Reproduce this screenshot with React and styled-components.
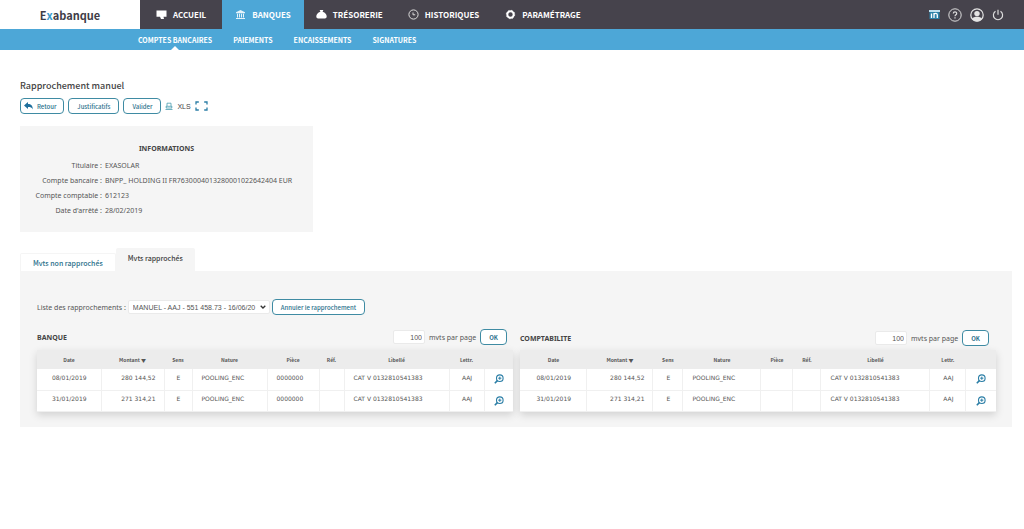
import React, { useState } from 'react';
import styled, { createGlobalStyle } from 'styled-components';

const sourceSans = '"Noto Sans CJK SC", "Noto Sans", sans-serif';
const verdana = '"Noto Sans", sans-serif';
const tableFont = '"DejaVu Sans", sans-serif';
const arial = '"Liberation Sans", sans-serif';

const menus = [
  { name: 'ACCUEIL', icon: 'screen', space: 16 },
  { name: 'BANQUES', icon: 'bank', space: 13 },
  { name: 'TRÉSORERIE', icon: 'purse', space: 12 },
  { name: 'HISTORIQUES', icon: 'clock', space: 13 },
  { name: 'PARAMÉTRAGE', icon: 'gear', space: 13 },
];

const subMenus = ['COMPTES BANCAIRES', 'PAIEMENTS', 'ENCAISSEMENTS', 'SIGNATURES'];

const infos = [
  ['Titulaire :', 'EXASOLAR'],
  ['Compte bancaire :', 'BNPP_ HOLDING II FR7630004013280001022642404 EUR'],
  ['Compte comptable :', '612123'],
  ["Date d'arrêté :", '28/02/2019'],
];

const bankColumns = [64, 63, 28, 75, 52, 25, 105, 35, 29];
const accountColumns = [67, 66, 30, 78, 32, 28, 109, 36, 30];

const bankRows = [
  { date: '08/01/2019', amount: '280 144,52', piece: '0000000' },
  { date: '31/01/2019', amount: '271 314,21', piece: '0000000' },
];
const accountRows = bankRows.map((row) => ({ ...row, piece: '' }));

function MenuIcon({ name }) {
  return (
    <svg width="11" height="11" viewBox="0 0 11 11" aria-hidden="true">
      {name === 'screen' && (
        <path d="M.5 1.500h10v6.300H7.500L8 10H5L4 7.800H.5z" fill="#fff" />
      )}
      {name === 'bank' && (
        <path
          d="M5.5 1L10 3.2v1H1v-1zM2 4.800h1v3.700H2zM4 4.800h1v3.700H4zM6 4.800h1v3.700H6zM8 4.800h1v3.700H8zM1 9h9v1H1z"
          fill="#e6f3fa"
        />
      )}
      {name === 'purse' && (
        <path
          d="M3.600 1h3.800l-.8 1.800C9.300 3.600 10.700 5.500 10.700 7.600c0 1.300-.8 1.900-1.800 1.900H2.100C1.100 9.500.3 8.900.3 7.600c0-2.100 1.400-4 4.100-4.800z"
          fill="#fff"
        />
      )}
      {name === 'clock' && (
        <g fill="none" stroke="#ddd">
          <circle cx="5.500" cy="5.500" r="4.600" />
          <path d="M5 3.500v2.300h2.200" />
        </g>
      )}
      {name === 'gear' && (
        <g fill="none" stroke="#fff">
          <circle cx="5.500" cy="5.500" r="3.200" strokeWidth="2" />
          <circle cx="5.500" cy="5.500" r="4.200" strokeWidth=".8" strokeDasharray="1.650 1.650" />
        </g>
      )}
    </svg>
  );
}

function Magnifier() {
  return (
    <svg width="10" height="10" viewBox="0 0 10 10" fill="none" stroke="#2b7ea6" aria-hidden="true">
      <circle cx="5.800" cy="4.200" r="3.300" strokeWidth="1.100" />
      <path d="M3.400 6.600L.8 9.200" strokeWidth="1.600" />
      <path d="M4.200 4.200h3.200M5.800 2.600v3.200" strokeWidth="1" />
    </svg>
  );
}

function Movements({ title, id, columns, rows, shift }) {
  const total = columns.reduce((sum, width) => sum + width, 0);
  const heads = ['Date', 'Montant ▼', 'Sens', 'Nature', 'Pièce', 'Réf.', 'Libellé', 'Lettr.', ''];

  return (
    <section>
      <ListHeader $shift={shift}>
        <ListTitle>{title}</ListTitle>
        <PageSize>
          <SizeInput id={id} type="text" defaultValue="100" />
          <label htmlFor={id}>mvts par page</label>
          <OkButton type="button">OK</OkButton>
        </PageSize>
      </ListHeader>
      <Table>
        <colgroup>
          {columns.map((width, index) => (
            <col key={index} style={{ width: `${(width / total) * 100}%` }} />
          ))}
        </colgroup>
        <thead>
          <tr>
            {heads.map((head) => (
              <th key={head}>{head}</th>
            ))}
          </tr>
        </thead>
        <tbody>
          {rows.map((row) => (
            <tr key={row.date}>
              <Cell $align="center">{row.date}</Cell>
              <Cell $align="right">{row.amount}</Cell>
              <Cell $align="center">E</Cell>
              <Cell>POOLING_ENC</Cell>
              <Cell>{row.piece}</Cell>
              <Cell />
              <Cell>CAT V 0132810541383</Cell>
              <Cell $align="center">AAJ</Cell>
              <ActionCell>
                <IconButton type="button" aria-label="Détail">
                  <Magnifier />
                </IconButton>
              </ActionCell>
            </tr>
          ))}
        </tbody>
      </Table>
    </section>
  );
}

export default function App() {
  const [menu, setMenu] = useState('BANQUES');
  const [tab, setTab] = useState('done');

  return (
    <>
      <GlobalStyle />
      <Header>
        <Logo href="#">
          E<span>x</span>abanque
        </Logo>
        <Nav>
          {menus.map(({ name, icon, space }) => (
            <MenuLink
              key={name}
              href="#"
              $active={menu === name}
              $space={space}
              onClick={() => setMenu(name)}
            >
              <MenuIcon name={icon} />
              {name}
            </MenuLink>
          ))}
        </Nav>
        <Tools>
          <IconButton type="button" aria-label="LinkedIn">
            <svg width="11" height="11" viewBox="0 0 11 11">
              <path d="M.5 1h10v9h-10z" fill="#2c82a8" />
              <path d="M0 1h11v2H0z" fill="#bfe0ee" />
              <path d="M2.500 4.500V9M5 9V4M5 5.500c.8-1.800 3.300-1.300 3.300.5v3" stroke="#fff" strokeWidth="1.300" fill="none" />
            </svg>
          </IconButton>
          <IconButton type="button" aria-label="Aide">
            <svg width="14" height="14" viewBox="0 0 14 14" fill="none" stroke="#ddd">
              <circle cx="7" cy="7" r="6.200" />
              <path d="M5.300 5.600C5.300 3.300 8.700 3.300 8.700 5.400 8.700 6.800 7 6.800 7 8.300M7 9.300v1.200" strokeWidth="1.200" />
            </svg>
          </IconButton>
          <IconButton type="button" aria-label="Profil">
            <svg width="14" height="14" viewBox="0 0 14 14">
              <circle cx="7" cy="7" r="6.200" fill="none" stroke="#e4e4e4" strokeWidth="1.200" />
              <circle cx="7" cy="5.600" r="2.700" fill="#e4e4e4" />
              <path d="M2 10.800C3 9 5 8.700 7 8.700s4 .3 5 2.100C10.500 14.300 3.500 14.300 2 10.800z" fill="#e4e4e4" />
            </svg>
          </IconButton>
          <IconButton type="button" aria-label="Déconnexion">
            <svg width="12" height="12" viewBox="0 0 12 12" fill="none" stroke="#ddd" strokeWidth="1.200">
              <path d="M3.500 2.300a4.600 4.600 0 1 0 5 0M6 .8v5" />
            </svg>
          </IconButton>
        </Tools>
      </Header>
      <SubNav>
        {subMenus.map((name, index) => (
          <SubLink key={name} href="#" $active={index === 0}>
            {name}
          </SubLink>
        ))}
      </SubNav>

      <Main>
        <Title>Rapprochement manuel</Title>
        <Toolbar>
          <BackButton type="button">
            <svg width="9" height="8" viewBox="0 0 9 8">
              <path d="M4 0v2c3 0 4.800 1.500 4.800 5.500C8 5.500 6.500 5 4 5v2L0 3.500z" fill="#1f6f9c" />
            </svg>
            Retour
          </BackButton>
          <Button type="button">Justificatifs</Button>
          <Button type="button">Valider</Button>
          <IconButton type="button" aria-label="Imprimer">
            <svg width="8" height="8" viewBox="0 0 8 8" fill="none" stroke="#4a9db0">
              <path d="M2 4V1.200h4V4M1.200 4.300h5.600M1 6h6M.5 7.500h7M1.200 4v2M6.800 4v2" strokeWidth=".8" />
            </svg>
          </IconButton>
          <XlsButton type="button">XLS</XlsButton>
          <IconButton type="button" aria-label="Plein écran">
            <svg width="13" height="10" viewBox="0 0 13 10" fill="none" stroke="#2b7ea6" strokeWidth="1.300">
              <path d="M3.800 1H1v2.500M1 6.500V9h2.800M9.200 1H12v2.500M12 6.500V9H9.200" />
            </svg>
          </IconButton>
        </Toolbar>

        <InfoCard>
          <InfoTitle>INFORMATIONS</InfoTitle>
          <InfoList>
            {infos.map(([label, value]) => (
              <React.Fragment key={label}>
                <dt>{label}</dt>
                <dd>{value}</dd>
              </React.Fragment>
            ))}
          </InfoList>
        </InfoCard>

        <Tabs role="tablist">
          <Tab type="button" role="tab" aria-selected={tab === 'todo'} $active={tab === 'todo'} onClick={() => setTab('todo')}>
            Mvts non rapprochés
          </Tab>
          <Tab type="button" role="tab" aria-selected={tab === 'done'} $active={tab === 'done'} onClick={() => setTab('done')}>
            Mvts rapprochés
          </Tab>
        </Tabs>
        <Panel>
          <Filter>
            <label htmlFor="rapprochement">Liste des rapprochements :</label>
            <SelectBox>
              <Select id="rapprochement">
                <option>MANUEL - AAJ - 551 458.73 - 16/06/20</option>
              </Select>
              <svg width="6" height="4" viewBox="0 0 6 4" fill="none" stroke="#333" strokeWidth="1.300">
                <path d="M.7.7L3 3 5.300.7" />
              </svg>
            </SelectBox>
            <Button type="button">Annuler le rapprochement</Button>
          </Filter>
          <Lists>
            <Movements title="BANQUE" id="bank-size" columns={bankColumns} rows={bankRows} />
            <Movements title="COMPTABILITE" id="account-size" columns={accountColumns} rows={accountRows} shift />
          </Lists>
        </Panel>
      </Main>
    </>
  );
}

const GlobalStyle = createGlobalStyle`
  * {
    box-sizing: border-box;
  }
  body {
    margin: 0;
    background: #fff;
    color: #555;
    font-family: ${verdana};
    font-size: 7px;
  }
  a {
    text-decoration: none;
  }
  button, input, select {
    margin: 0;
    font: inherit;
    color: inherit;
  }
  svg {
    display: block;
    flex-shrink: 0;
  }
`;

const Header = styled.header`
  display: flex;
  height: 29px;
  background: #46434c;
`;

const Logo = styled.a`
  display: flex;
  align-items: center;
  justify-content: center;
  width: 140px;
  background: #fff;
  color: #3f3d47;
  font-family: ${sourceSans};
  font-size: 11px;
  font-weight: 700;
  span {
    color: #3c9ccd;
  }
`;

const Nav = styled.nav`
  display: flex;
`;

const MenuLink = styled.a`
  display: flex;
  align-items: center;
  gap: 6px;
  padding: 0 ${({ $space }) => $space}px;
  background: ${({ $active }) => ($active ? '#4da7d7' : 'transparent')};
  color: #fff;
  font-family: ${sourceSans};
  font-size: 8px;
  font-weight: 700;
`;

const Tools = styled.div`
  display: flex;
  align-items: center;
  gap: 8px;
  margin-left: auto;
  padding-right: 20px;
`;

const IconButton = styled.button`
  display: inline-flex;
  padding: 0;
  border: 0;
  background: none;
  cursor: pointer;
`;

const SubNav = styled.nav`
  display: flex;
  gap: 21px;
  height: 21px;
  padding-left: 138px;
  background: #4da7d7;
`;

const SubLink = styled.a`
  position: relative;
  display: flex;
  align-items: center;
  color: #fff;
  font-family: ${sourceSans};
  font-size: 7px;
  font-weight: 700;
  &::after {
    content: '';
    display: ${({ $active }) => ($active ? 'block' : 'none')};
    position: absolute;
    bottom: 0;
    left: calc(50% - 4px);
    border: 4px solid transparent;
    border-top: 0;
    border-bottom-color: #fff;
  }
`;

const Main = styled.main`
  padding: 28px 12px 0 20px;
`;

const Title = styled.h1`
  margin: 0;
  color: #444;
  font-family: ${sourceSans};
  font-size: 9px;
  font-weight: 500;
  line-height: 16px;
`;

const Toolbar = styled.div`
  display: flex;
  align-items: center;
  gap: 4px;
  margin-top: 4px;
`;

const Button = styled.button`
  display: inline-flex;
  align-items: center;
  gap: 4px;
  height: 16px;
  padding: 0 8px;
  border: 1px solid #3f8ba3;
  border-radius: 4px;
  background: #fff;
  color: #2b718c;
  font-family: ${sourceSans};
  font-size: 6px;
  font-weight: 500;
  cursor: pointer;
`;

const BackButton = styled(Button)`
  padding: 0 7px 0 3px;
`;

const OkButton = styled(Button)`
  font-weight: 700;
`;

const XlsButton = styled(IconButton)`
  color: #444;
  font-family: ${arial};
  font-size: 7px;
`;

const InfoCard = styled.section`
  width: 293px;
  margin-top: 12px;
  padding: 18px 0 14px;
  background: #f5f5f5;
`;

const InfoTitle = styled.h2`
  margin: 0 0 4px;
  color: #444;
  font-size: 7px;
  line-height: 10px;
  text-align: center;
`;

const InfoList = styled.dl`
  display: grid;
  grid-template-columns: 82px 1fr;
  column-gap: 3px;
  margin: 0;
  line-height: 15px;
  dt {
    text-align: right;
  }
  dd {
    margin: 0;
  }
`;

const Tabs = styled.div`
  display: flex;
  align-items: flex-end;
  margin-top: 16px;
`;

const Tab = styled.button`
  height: ${({ $active }) => ($active ? 23 : 18)}px;
  padding: 0 12px ${({ $active }) => ($active ? 4 : 0)}px;
  border: ${({ $active }) => ($active ? '0' : '1px solid #f5f5f5')};
  border-bottom: 0;
  border-radius: 2px 2px 0 0;
  background: ${({ $active }) => ($active ? '#f5f5f5' : '#fff')};
  color: ${({ $active }) => ($active ? '#444' : '#2b718c')};
  font-family: ${sourceSans};
  font-size: 7px;
  font-weight: 500;
  cursor: pointer;
`;

const Panel = styled.div`
  padding: 28px 16px 15px 17px;
  background: #f5f5f5;
`;

const Filter = styled.div`
  display: flex;
  align-items: center;
  gap: 2px;
`;

const SelectBox = styled.div`
  display: flex;
  align-items: center;
  width: 142px;
  height: 14px;
  padding-right: 3px;
  border: 1px solid #eaeaea;
  border-radius: 2px;
  background: #fff;
`;

const Select = styled.select`
  appearance: none;
  flex: 1;
  min-width: 0;
  padding: 0 4px;
  border: 0;
  background: none;
  font-family: ${arial};
  font-size: 7px;
`;

const Lists = styled.div`
  display: grid;
  grid-template-columns: 1fr 1fr;
  gap: 7px;
  margin-top: 14px;
`;

const ListHeader = styled.div`
  display: flex;
  align-items: center;
  justify-content: space-between;
  height: 21px;
  padding: ${({ $shift }) => ($shift ? '0 7px 3px 0' : '0 6px 5px 0')};
`;

const ListTitle = styled.h3`
  margin: 0;
  color: #444;
  font-size: 7px;
`;

const PageSize = styled.div`
  display: flex;
  align-items: center;
  gap: 4px;
`;

const SizeInput = styled.input`
  width: 32px;
  height: 14px;
  padding: 0 2px;
  border: 1px solid #eaeaea;
  border-radius: 2px;
  background: #fff;
  font-family: ${arial};
  text-align: right;
`;

const Table = styled.table`
  width: 100%;
  table-layout: fixed;
  border-collapse: collapse;
  background: #fff;
  box-shadow: 0 3px 8px rgba(0, 0, 0, 0.15);
  font-family: ${tableFont};
  font-size: 6px;
  th {
    height: 19px;
    padding: 0;
    background: #ececec;
    font-family: ${sourceSans};
    font-size: 5px;
    font-weight: 700;
    line-height: 8px;
    white-space: nowrap;
  }
`;

const Cell = styled.td`
  height: 21px;
  padding: 0 8px 4px 9px;
  border: 1px solid #f0f0f0;
  border-width: 0 1px 1px 0;
  text-align: ${({ $align = 'left' }) => $align};
  white-space: nowrap;
`;

const ActionCell = styled.td`
  padding: 0;
  border-bottom: 1px solid #f0f0f0;
  text-align: center;
  line-height: 0;
`;
